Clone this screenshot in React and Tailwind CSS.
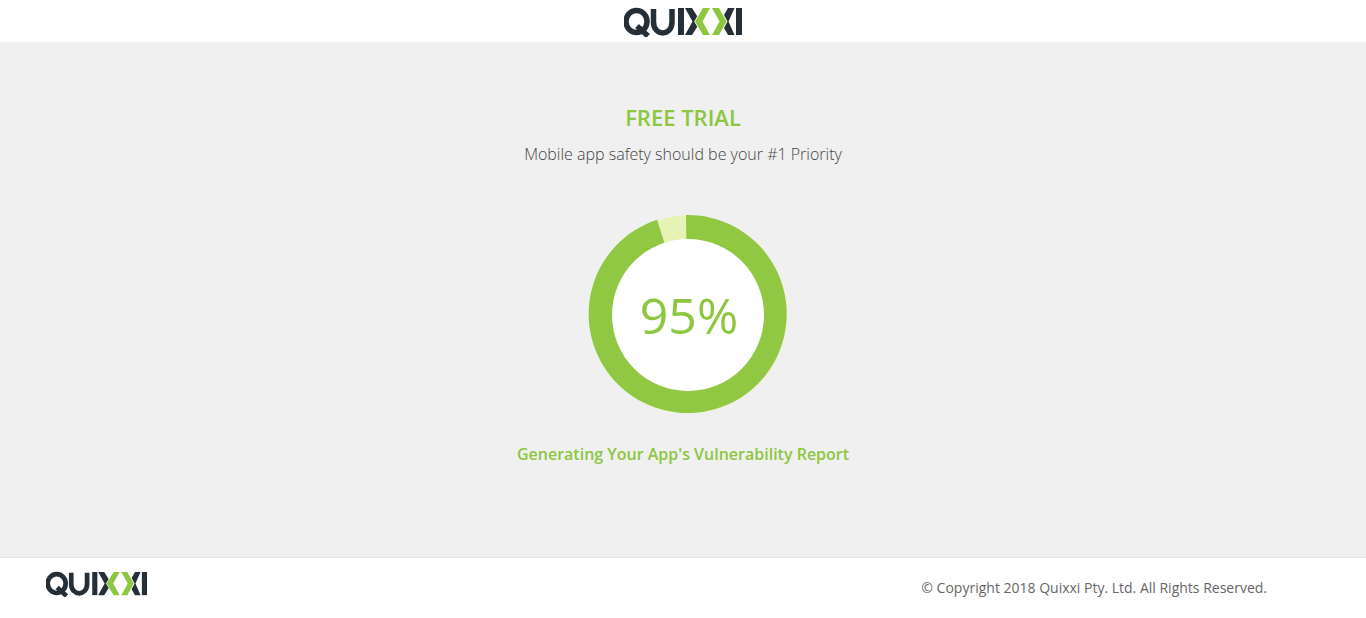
import React from 'react';

function Logo({ className }) {
  return (
    <svg viewBox="0 0 118 30" className={className} role="img" aria-label="Quixxi">
      <g fill="none" stroke="#252f37" strokeWidth="5.5">
        <ellipse cx="12.5" cy="14.5" rx="10.5" ry="11" />
        <path d="M13 19 L24 29" />
        <path d="M29.5 2 V15 C29.5 29.5 48 29.5 48 15 V2" />
      </g>
      <rect x="54" y="1" width="6" height="27" fill="#252f37" />
      <path d="M61 1 H68 L75 12 L72 17 L75 17 L68 28 H61 L68.5 14.5 Z" fill="#252f37" />
      <path d="M79 1 H86 L78.5 14.5 L86 28 H79 L71 14.5 Z" fill="#8dc63f" stroke="#ffffff" strokeWidth="1.5" paintOrder="stroke" />
      <path d="M88 1 H95 L102.5 14.5 L95 28 H88 L95.5 14.5 Z" fill="#8dc63f" />
      <path d="M104 1 H110.5 L104.5 14.5 L110.5 28 H104 L100 21 L103.5 14.5 L100 8 Z" fill="#252f37" stroke="#ffffff" strokeWidth="1" paintOrder="stroke" />
      <rect x="112" y="1" width="6" height="27" fill="#252f37" />
    </svg>
  );
}

function Donut() {
  return (
    <svg viewBox="0 0 200 200" className="h-[200px] w-[200px]">
      <circle cx="101" cy="100.5" r="99" fill="#e6f2b6" />
      <path d="M100.5 100 L99 1 A99 99 0 1 1 70 5.85 Z" fill="#90c843" />
      <circle cx="101" cy="101" r="76" fill="#ffffff" />
    </svg>
  );
}

export default function App() {
  return (
    <div className="flex h-[618px] flex-col bg-white font-['Open_Sans',sans-serif]">
      <header className="flex h-[42px] shrink-0 items-start justify-center pt-[7px]">
        <Logo className="h-[30px] w-[118px]" />
      </header>

      <main className="flex h-[515px] shrink-0 flex-col items-center bg-[#f0f0f0] pt-[61px]">
        <h1 className="text-[22px] leading-[28px] font-semibold text-[#8dc63f]">FREE TRIAL</h1>
        <p className="mt-[11px] text-base leading-[24px] font-light text-[#444444]">
          Mobile app safety should be your #1 Priority
        </p>
        <div className="relative mt-[48px] ml-[8px] h-[200px] w-[200px]">
          <Donut />
          <span className="absolute inset-0 flex items-center justify-center pt-[2px] pl-[4px] text-[50px] text-[#8dc63f]">95%</span>
        </div>
        <p className="mt-[28px] text-base leading-[24px] font-semibold text-[#8dc63f]">
          Generating Your App's Vulnerability Report
        </p>
      </main>

      <footer className="flex flex-1 items-start justify-between border-t border-[#e6e6e6] pt-[13px] pr-[99px] pl-[46px]">
        <Logo className="h-[26px] w-[101px]" />
        <p className="mt-[7px] text-sm leading-[20px] text-[#666666]">© Copyright 2018 Quixxi Pty. Ltd. All Rights Reserved.</p>
      </footer>
    </div>
  );
}
